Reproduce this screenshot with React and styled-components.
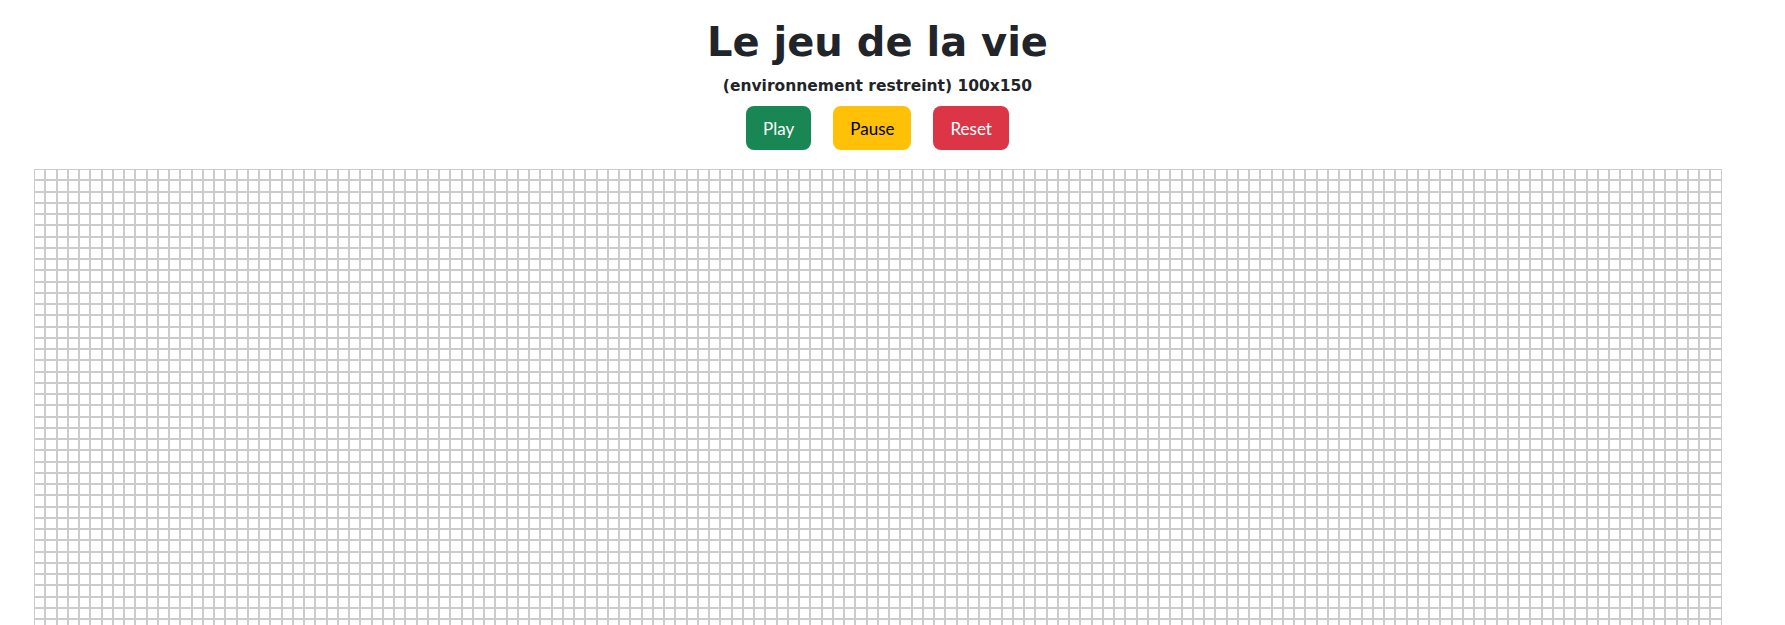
import { styled, createGlobalStyle } from "styled-components";

const ROWS = 100;
const COLS = 150;

const GlobalStyle = createGlobalStyle`
  body {
    margin: 0;
    background: #fff;
    font-family: "Lato", "Liberation Sans", sans-serif;
    color: #212529;
  }
`;

const Page = styled.div`
  width: 1687px;
  margin-left: 34px;
  display: flex;
  flex-direction: column;
  align-items: center;
`;

const Title = styled.h1`
  margin: 18px 0 0;
  font-family: "DejaVu Sans", sans-serif;
  font-weight: 700;
  font-size: 40px;
  line-height: 48px;
  color: #212529;
`;

const Subtitle = styled.h6`
  margin: 10px 0 0;
  font-family: "DejaVu Sans", sans-serif;
  font-weight: 700;
  font-size: 15.5px;
  line-height: 20px;
  color: #212529;
`;

const Controls = styled.div`
  display: flex;
  gap: 22px;
  margin-top: 10px;
`;

const colors = {
  success: { bg: "#198754", fg: "#fff" },
  warning: { bg: "#ffc107", fg: "#000" },
  danger: { bg: "#dc3545", fg: "#fff" },
};

const Button = styled.button`
  font-family: "Lato", sans-serif;
  font-size: 17px;
  height: 44px;
  padding: 0 17px;
  border: none;
  border-radius: 8px;
  background: ${(p) => colors[p.$variant].bg};
  color: ${(p) => colors[p.$variant].fg};
  cursor: pointer;
`;

const Board = styled.div`
  margin-top: 19px;
  width: 100%;
  display: grid;
  grid-template-columns: repeat(${COLS}, 1fr);
`;

const Cell = styled.div`
  aspect-ratio: 1;
  border: 1px solid #cccccc;
  background: ${(p) => (p.$alive ? "#212529" : "#fff")};
`;

const cells = Array.from({ length: ROWS * COLS });

export default function App() {
  return (
    <>
      <GlobalStyle />
      <Page>
        <Title>Le jeu de la vie</Title>
        <Subtitle>(environnement restreint) 100x150</Subtitle>
        <Controls>
          <Button $variant="success">Play</Button>
          <Button $variant="warning">Pause</Button>
          <Button $variant="danger">Reset</Button>
        </Controls>
        <Board>
          {cells.map((_, i) => (
            <Cell key={i} />
          ))}
        </Board>
      </Page>
    </>
  );
}
